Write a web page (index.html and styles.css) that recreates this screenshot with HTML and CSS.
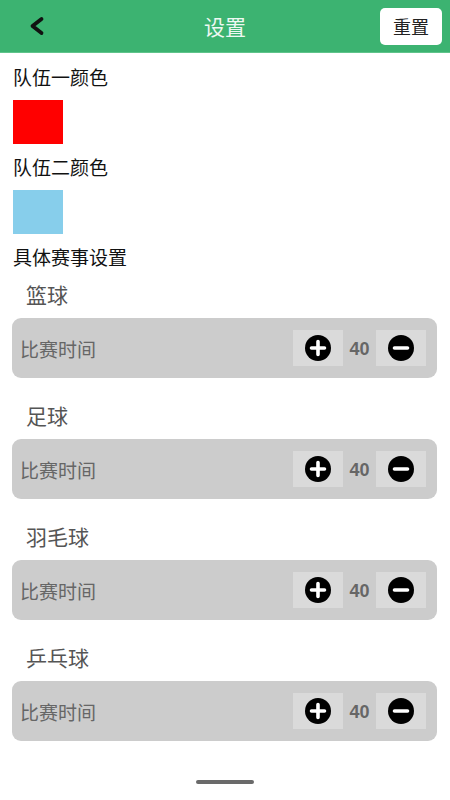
FILE: index.html
```html
<!DOCTYPE html>
<html lang="zh">
<head>
<meta charset="utf-8">
<link rel="stylesheet" href="styles.css">
</head>
<body>
<div class="app">
  <header class="topbar">
    <div class="back">
      <svg width="18" height="20" viewBox="0 0 18 20"><path d="M13.5 3 L4.5 10 L13.5 17" fill="none" stroke="#111" stroke-width="3.8" stroke-linecap="round" stroke-linejoin="round"/></svg>
    </div>
    <div class="title">设置</div>
    <button class="reset">重置</button>
  </header>
  <main class="content">
    <div class="label first">队伍一颜色</div>
    <div class="swatch red"></div>
    <div class="label">队伍二颜色</div>
    <div class="swatch blue"></div>
    <div class="label">具体赛事设置</div>

    <section class="sport first-sport">
      <div class="sport-name">篮球</div>
      <div class="card">
        <span class="card-label">比赛时间</span>
        <div class="stepper">
          <div class="step"><svg width="26" height="26" viewBox="0 0 26 26"><circle cx="13" cy="13" r="13" fill="#000"/><path d="M13 6.5v13M6.5 13h13" stroke="#fff" stroke-width="3.6" stroke-linecap="round"/></svg></div>
          <span class="value">40</span>
          <div class="step"><svg width="26" height="26" viewBox="0 0 26 26"><circle cx="13" cy="13" r="13" fill="#000"/><path d="M6.5 13h13" stroke="#fff" stroke-width="3.6" stroke-linecap="round"/></svg></div>
        </div>
      </div>
    </section>

    <section class="sport">
      <div class="sport-name">足球</div>
      <div class="card">
        <span class="card-label">比赛时间</span>
        <div class="stepper">
          <div class="step"><svg width="26" height="26" viewBox="0 0 26 26"><circle cx="13" cy="13" r="13" fill="#000"/><path d="M13 6.5v13M6.5 13h13" stroke="#fff" stroke-width="3.6" stroke-linecap="round"/></svg></div>
          <span class="value">40</span>
          <div class="step"><svg width="26" height="26" viewBox="0 0 26 26"><circle cx="13" cy="13" r="13" fill="#000"/><path d="M6.5 13h13" stroke="#fff" stroke-width="3.6" stroke-linecap="round"/></svg></div>
        </div>
      </div>
    </section>

    <section class="sport">
      <div class="sport-name">羽毛球</div>
      <div class="card">
        <span class="card-label">比赛时间</span>
        <div class="stepper">
          <div class="step"><svg width="26" height="26" viewBox="0 0 26 26"><circle cx="13" cy="13" r="13" fill="#000"/><path d="M13 6.5v13M6.5 13h13" stroke="#fff" stroke-width="3.6" stroke-linecap="round"/></svg></div>
          <span class="value">40</span>
          <div class="step"><svg width="26" height="26" viewBox="0 0 26 26"><circle cx="13" cy="13" r="13" fill="#000"/><path d="M6.5 13h13" stroke="#fff" stroke-width="3.6" stroke-linecap="round"/></svg></div>
        </div>
      </div>
    </section>

    <section class="sport">
      <div class="sport-name">乒乓球</div>
      <div class="card">
        <span class="card-label">比赛时间</span>
        <div class="stepper">
          <div class="step"><svg width="26" height="26" viewBox="0 0 26 26"><circle cx="13" cy="13" r="13" fill="#000"/><path d="M13 6.5v13M6.5 13h13" stroke="#fff" stroke-width="3.6" stroke-linecap="round"/></svg></div>
          <span class="value">40</span>
          <div class="step"><svg width="26" height="26" viewBox="0 0 26 26"><circle cx="13" cy="13" r="13" fill="#000"/><path d="M6.5 13h13" stroke="#fff" stroke-width="3.6" stroke-linecap="round"/></svg></div>
        </div>
      </div>
    </section>
  </main>
  <div class="home-indicator"></div>
</div>
</body>
</html>
```
FILE: styles.css
```css
* { box-sizing: border-box; }
html, body {
  margin: 0;
  padding: 0;
  background: #fff;
  font-family: "Noto Sans CJK SC", "Noto Sans", sans-serif;
}
.app {
  width: 450px;
  height: 800px;
  position: relative;
  overflow: hidden;
}
.topbar {
  height: 53px;
  background: #3cb371;
  border-bottom: 1px solid #5fc48b;
  display: flex;
  align-items: center;
  justify-content: space-between;
  padding: 0 8px 0 28px;
  position: relative;
}
.back {
  width: 20px;
  height: 20px;
  display: flex;
  align-items: center;
}
.title {
  position: absolute;
  left: 0;
  right: 0;
  text-align: center;
  color: #eef8f2;
  font-size: 21px;
  line-height: 53px;
  pointer-events: none;
}
.reset {
  width: 62px;
  height: 37px;
  border: none;
  border-radius: 5px;
  background: #fff;
  color: #222;
  font-family: "Noto Sans CJK SC", sans-serif;
  font-size: 18px;
  padding: 0;
  position: relative;
  z-index: 1;
}
.content {
  padding: 0 13px 0 12px;
}
.label {
  font-size: 19px;
  line-height: 24px;
  color: #111;
  margin-top: 11px;
  padding-left: 1px;
}
.label.first { margin-top: 12px; }
.swatch {
  width: 50px;
  height: 44px;
  margin-top: 11px;
  margin-left: 1px;
}
.red { background: #ff0000; }
.blue { background: #87ceeb; }
.sport { margin-top: 25px; }
.sport.first-sport { margin-top: 13px; }
.sport-name {
  font-size: 21px;
  line-height: 24px;
  color: #555;
  padding-left: 14px;
}
.card {
  margin-top: 12px;
  height: 60px;
  background: #cccccc;
  border-radius: 9px;
  display: flex;
  align-items: center;
  justify-content: space-between;
  padding: 0 11px 0 8px;
}
.card-label {
  font-size: 19px;
  color: #666;
}
.stepper {
  display: flex;
  align-items: center;
}
.step {
  width: 50px;
  height: 36px;
  background: #dadada;
  display: flex;
  align-items: center;
  justify-content: center;
}
.value {
  width: 33px;
  text-align: center;
  font-family: "Liberation Sans", Arial, sans-serif;
  font-weight: bold;
  font-size: 18px;
  line-height: 36px;
  padding-top: 2px;
  color: #666;
}
.home-indicator {
  position: absolute;
  left: 196px;
  top: 780px;
  width: 58px;
  height: 4px;
  border-radius: 2px;
  background: #6a6a6a;
}
```
